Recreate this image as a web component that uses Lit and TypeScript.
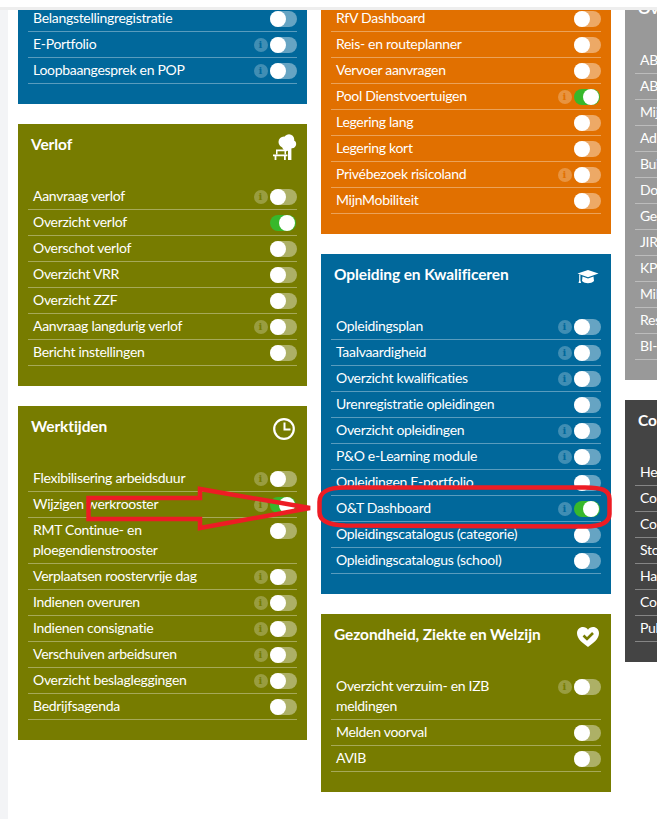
import { LitElement, html, css, svg } from 'lit';
import { customElement, property } from 'lit/decorators.js';
import { classMap } from 'lit/directives/class-map.js';

type Row = { label: string; info?: boolean; on?: boolean };
type Card = { title?: string; tone: string; icon?: string; clipped?: boolean; rows: Row[] };

const icons: { [key: string]: unknown } = {
	bench: svg`<g fill="#fff">
		<circle cx="11" cy="8" r="5.5" /><circle cx="16" cy="5.5" r="5.2" /><circle cx="19" cy="10" r="4.2" /><circle cx="14" cy="12" r="5" />
		<path d="M15 12h3.4v14H15z" />
		<path d="M3 15.6h11v1.6H3zM0 20.4h14.4v1.8H0z" />
		<path d="M3 17h1.5v3.4H3zM11.5 17h1.5v3.4h-1.5zM1.6 22h1.8v4H1.6zM11 22h1.8v4H11z" />
	</g>`,
	clock: svg`<g fill="none" stroke="#fff">
		<circle cx="11" cy="13" r="9.8" stroke-width="2.2" />
		<path d="M11.5 6.5v7h6" stroke-width="2" />
	</g>`,
	cap: svg`<g fill="#fff">
		<path d="M11 6 21.5 9.6 11 13.2 .5 9.6z" />
		<path d="M5.5 12.4 11 14.4 16.5 12.4 17 17c-3 3-9 3-12 0z" />
		<path d="M2.2 10.5h1.2v6l.7 2.6H1.500l.7-2.6z" />
	</g>`,
	heart: svg`<path fill="#fff" d="M11 23C6 19.2 0 15 0 9.2 0 5.4 2.7 3 6 3c2.1 0 3.9 1 5 2.8C12.1 4 13.9 3 16 3c3.3 0 6 2.4 6 6.2C22 15 16 19.2 11 23z" />
		<path fill="none" stroke="#777c00" stroke-width="2.6" d="M6.5 11.5 10 15l6-6" />`,
};

const columns: Card[][] = [
	[
		{
			tone: 'blue',
			clipped: true,
			rows: [{ label: 'Belangstellingregistratie' }, { label: 'E-Portfolio', info: true }, { label: 'Loopbaangesprek en POP', info: true }],
		},
		{
			title: 'Verlof',
			tone: 'olive',
			icon: 'bench',
			rows: [
				{ label: 'Aanvraag verlof', info: true },
				{ label: 'Overzicht verlof', on: true },
				{ label: 'Overschot verlof' },
				{ label: 'Overzicht VRR' },
				{ label: 'Overzicht ZZF' },
				{ label: 'Aanvraag langdurig verlof', info: true },
				{ label: 'Bericht instellingen' },
			],
		},
		{
			title: 'Werktijden',
			tone: 'olive',
			icon: 'clock',
			rows: [
				{ label: 'Flexibilisering arbeidsduur', info: true },
				{ label: 'Wijzigen werkrooster', info: true, on: true },
				{ label: 'RMT Continue- en\nploegendienstrooster' },
				{ label: 'Verplaatsen roostervrije dag', info: true },
				{ label: 'Indienen overuren', info: true },
				{ label: 'Indienen consignatie', info: true },
				{ label: 'Verschuiven arbeidsuren', info: true },
				{ label: 'Overzicht beslagleggingen', info: true },
				{ label: 'Bedrijfsagenda' },
			],
		},
	],
	[
		{
			tone: 'orange',
			clipped: true,
			rows: [
				{ label: 'RfV Dashboard' },
				{ label: 'Reis- en routeplanner' },
				{ label: 'Vervoer aanvragen' },
				{ label: 'Pool Dienstvoertuigen', info: true, on: true },
				{ label: 'Legering lang' },
				{ label: 'Legering kort' },
				{ label: 'Privébezoek risicoland', info: true },
				{ label: 'MijnMobiliteit' },
			],
		},
		{
			title: 'Opleiding en Kwalificeren',
			tone: 'blue',
			icon: 'cap',
			rows: [
				{ label: 'Opleidingsplan', info: true },
				{ label: 'Taalvaardigheid', info: true },
				{ label: 'Overzicht kwalificaties', info: true },
				{ label: 'Urenregistratie opleidingen' },
				{ label: 'Overzicht opleidingen', info: true },
				{ label: 'P&O e-Learning module', info: true },
				{ label: 'Opleidingen E-portfolio' },
				{ label: 'O&T Dashboard', info: true, on: true },
				{ label: 'Opleidingscatalogus (categorie)' },
				{ label: 'Opleidingscatalogus (school)' },
			],
		},
		{
			title: 'Gezondheid, Ziekte en Welzijn',
			tone: 'olive',
			icon: 'heart',
			rows: [{ label: 'Overzicht verzuim- en IZB\nmeldingen', info: true }, { label: 'Melden voorval' }, { label: 'AVIB' }],
		},
	],
	[
		{
			title: 'Ov',
			tone: 'grey',
			rows: ['ABP', 'ABP', 'Mij', 'Adr', 'Bui', 'Do', 'Ge', 'JIRA', 'KPI', 'Mil', 'Res', 'BI-'].map((label) => ({ label })),
		},
		{
			title: 'Con',
			tone: 'dark',
			rows: ['Het', 'Con', 'Con', 'Sto', 'Har', 'Con', 'Pub'].map((label) => ({ label })),
		},
	],
];

@customElement('tile-card')
export class TileCard extends LitElement {
	@property({ attribute: false })
	card!: Card;

	static styles = css`
		:host {
			display: block;
		}
		.card {
			--bg: #777c00;
			padding: 0 10px 20px;
			background: var(--bg);
			color: #fff;
			font-family: 'Lato', 'Liberation Sans', sans-serif;
		}
		.blue {
			--bg: #01689b;
		}
		.olive {
			--bg: #777c00;
		}
		.orange {
			--bg: #e17000;
		}
		.grey {
			--bg: #999;
		}
		.dark {
			--bg: #444;
		}
		.clipped {
			padding-top: 18px;
		}
		.head {
			display: flex;
			justify-content: space-between;
			height: 60px;
			padding-left: 3px;
		}
		.title {
			margin: 10px 0 0;
			font-size: 15.5px;
			font-weight: 700;
			letter-spacing: -0.1px;
			line-height: 20px;
			white-space: nowrap;
		}
		.head svg {
			display: block;
			margin-top: 10px;
			overflow: visible;
		}
		.row {
			display: flex;
			align-items: flex-start;
			padding: 2px 0 3px 5px;
			border-bottom: 1px solid rgba(255, 255, 255, 0.35);
		}
		.label {
			flex: 1;
			font-size: 14px;
			letter-spacing: -0.3px;
			line-height: 20px;
			white-space: pre-line;
		}
		.info {
			flex: none;
			width: 14px;
			height: 14px;
			margin: 4px 2.5px 0 0;
			border-radius: 50%;
			background: rgba(255, 255, 255, 0.25);
			color: var(--bg);
			font: 700 10px/14px 'DejaVu Serif', serif;
			text-align: center;
		}
		.toggle {
			flex: none;
			display: flex;
			width: 27px;
			height: 16px;
			margin-top: 3px;
			border-radius: 8px;
			background: rgba(255, 255, 255, 0.4);
		}
		.toggle::after {
			content: '';
			width: 16px;
			height: 16px;
			border-radius: 50%;
			background: #fff;
		}
		.toggle.on {
			justify-content: flex-end;
			width: 26px;
			padding: 0 1px 0 0;
			margin-right: 1px;
			background: #37b82b;
			box-sizing: border-box;
		}
	`;

	renderRow(row: Row) {
		return html`<div class="row">
			<span class="label">${row.label}</span>
			${row.info ? html`<span class="info">i</span>` : ''}
			<span class=${classMap({ toggle: true, on: !!row.on })}></span>
		</div>`;
	}

	render() {
		const { title, tone, icon, clipped, rows } = this.card;
		return html`<section class=${classMap({ card: true, [tone]: true, clipped: !!clipped })}>
			${clipped
				? ''
				: html`<header class="head">
						<h2 class="title">${title}</h2>
						${icon ? html`<svg width="24" height="28" viewBox="0 0 24 28">${icons[icon]}</svg>` : ''}
				  </header>`}
			${rows.map((row) => this.renderRow(row))}
		</section>`;
	}
}

@customElement('app-root')
export class AppRoot extends LitElement {
	static styles = css`
		:host {
			display: block;
			position: relative;
			height: 100vh;
			overflow: hidden;
			background: #fff;
		}
		.topbar {
			position: relative;
			z-index: 1;
			height: 7px;
			background: #fff;
			border-bottom: 3px solid #eee;
		}
		.shell {
			display: flex;
			height: calc(100vh - 10px);
			overflow: hidden;
		}
		.rail {
			flex: none;
			width: 8px;
			background: #f3f4f6;
		}
		.columns {
			display: grid;
			grid-template-columns: 289px 290px 289px;
			gap: 14px;
			align-items: start;
			margin: -22px 0 0 10px;
		}
		.column {
			display: flex;
			flex-direction: column;
			gap: 20px;
		}
		.marks {
			position: absolute;
			inset: 0;
			z-index: 2;
			pointer-events: none;
		}
	`;

	render() {
		return html`<div class="topbar"></div>
			<div class="shell">
				<div class="rail"></div>
				<main class="columns">
					${columns.map(
						(cards) => html`<div class="column">${cards.map((card) => html`<tile-card .card=${card}></tile-card>`)}</div>`
					)}
				</main>
			</div>
			<svg class="marks" width="657" height="819" viewBox="0 0 657 819">
				<g fill="none" stroke="#ed1c24" stroke-width="4.5" stroke-linejoin="miter">
					<path d="M200 498H88.5V519H200V528L310 508 200 489z" />
					<path
						d="M319.5 502C319.5 492 327 487.5 345 487.5H585C602 487.5 609.5 490 609.5 499V514C609.5 522 602 526.5 585 526.5L345 525.5C327 525 319.5 520 319.5 512z"
					/>
				</g>
			</svg>`;
	}
}
